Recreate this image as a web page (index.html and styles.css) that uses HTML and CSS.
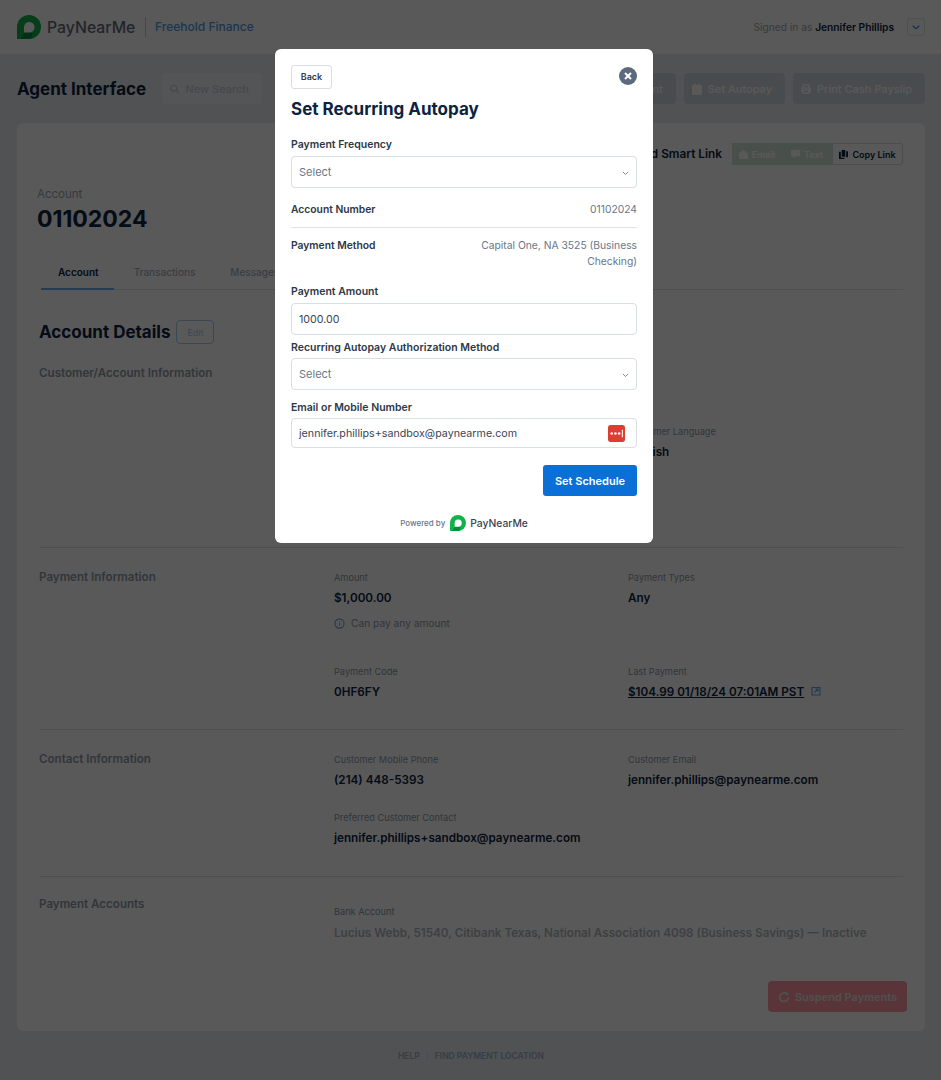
FILE: index.html
```html
<!DOCTYPE html>
<html lang="en">
<head>
    <meta charset="UTF-8">
    <meta name="viewport" content="width=device-width, initial-scale=1.0">
    <title>Agent Interface</title>
    <link rel="stylesheet" href="styles.css">
</head>
<body>
    <!-- Top bar -->
    <header class="topbar">
        <div class="brand">
            <svg class="logo" viewBox="0 0 24 24"><path fill="#12b24b" d="M0 24V12A12 12 0 1 1 12 24Z"/><path fill="#0b8a3a" d="M3.800 24 8 15.500l8 3-2 5.300Z"/><path fill="#fff" d="M7 17.500V12a5.300 5.300 0 1 1 5.300 5.500Z"/></svg>
            <span class="logo-text">PayNearMe</span>
            <span class="client">Freehold Finance</span>
        </div>
        <div class="user">
            <span>Signed in as <b>Jennifer Phillips</b></span>
            <button class="user-btn"><svg viewBox="0 0 10 6"><path d="M1 1l4 4 4-4" fill="none" stroke="#2a8fff" stroke-width="1.600"/></svg></button>
        </div>
    </header>

    <main class="page">
        <div class="toolbar">
            <h1>Agent Interface</h1>
            <button class="tool search">
                <svg viewBox="0 0 12 12"><circle cx="5" cy="5" r="3.800" fill="none" stroke="currentColor" stroke-width="1.500"/><path d="M8 8l3.500 3.500" stroke="currentColor" stroke-width="1.800"/></svg>
                New Search
            </button>
            <div class="tool-group">
                <button class="tool">Make Payment</button>
                <button class="tool">
                    <svg viewBox="0 0 10 12"><path fill="currentColor" d="M0 3.500a1.500 1.500 0 0 1 1.500-1.500H2V.5h1.500V2h3V.5H8V2h.5A1.500 1.500 0 0 1 10 3.500v7A1.500 1.500 0 0 1 8.500 12h-7A1.500 1.500 0 0 1 0 10.500Z"/></svg>
                    Set Autopay
                </button>
                <button class="tool">
                    <svg viewBox="0 0 11 11"><path fill="none" stroke="currentColor" stroke-width="1.400" d="M2.500 4V1h6v3M2.500 8.500H1V4.500h9v4H8.500M2.500 6.800h6V10h-6Z"/></svg>
                    Print Cash Payslip
                </button>
            </div>
        </div>

        <section class="card">
            <div class="smart">
                <span class="smart-title">Send Smart Link</span>
                <div class="smart-btns">
                    <span class="sm off"><svg viewBox="0 0 10 10"><path fill="currentColor" d="M0 4 5 0l5 4v6H0Z"/></svg>Email</span>
                    <span class="sm off"><svg viewBox="0 0 10 10"><path fill="currentColor" d="M0 0h10v7H5L2.500 9.500V7H0Z"/></svg>Text</span>
                    <span class="sm on"><svg viewBox="0 0 10 10"><path fill="currentColor" d="M3 0h4v7.500H3ZM0 2h2v6.500h4V10H0ZM8 1.500h2V8H8Z"/></svg>Copy Link</span>
                </div>
            </div>

            <div class="acct-label">Account</div>
            <div class="acct-num">01102024</div>

            <nav class="tabs">
                <a class="tab active">Account</a>
                <a class="tab">Transactions</a>
                <a class="tab">Messages</a>
            </nav>

            <div class="details-head">
                <h2>Account Details</h2>
                <button class="edit">Edit</button>
            </div>

            <div class="row row-customer">
                <h3>Customer/Account Information</h3>
                <div class="field"></div>
                <div class="field lang"><label>Customer Language</label><p>English</p></div>
            </div>

            <div class="row row-payment">
                <h3>Payment Information</h3>
                <div class="field">
                    <label>Amount</label><p>$1,000.00</p>
                    <div class="note"><svg viewBox="0 0 12 12"><circle cx="6" cy="6" r="5" fill="none" stroke="#5aa8f0" stroke-width="1.200"/><path d="M6 5.200v3.300M6 3.200v1" stroke="#5aa8f0" stroke-width="1.200"/></svg>Can pay any amount</div>
                </div>
                <div class="field"><label>Payment Types</label><p>Any</p></div>
                <div class="field later"><label>Payment Code</label><p>0HF6FY</p></div>
                <div class="field later"><label>Last Payment</label>
                    <p><u>$104.99 01/18/24 07:01AM PST</u><svg class="ext" viewBox="0 0 10 10"><path d="M1 1.500h8v7.500H1zM3.500 6.500 7 3M4.500 3H7v2.500" fill="none" stroke="#5aa8f0" stroke-width="1.100"/></svg></p>
                </div>
            </div>

            <div class="row row-contact">
                <h3>Contact Information</h3>
                <div class="field"><label>Customer Mobile Phone</label><p>(214) 448-5393</p></div>
                <div class="field"><label>Customer Email</label><p>jennifer.phillips@paynearme.com</p></div>
                <div class="field later"><label>Preferred Customer Contact</label><p>jennifer.phillips+sandbox@paynearme.com</p></div>
            </div>

            <div class="row row-accounts">
                <h3>Payment Accounts</h3>
                <div class="field wide"><label>Bank Account</label><p class="muted">Lucius Webb, 51540, Citibank Texas, National Association 4098 (Business Savings) — Inactive</p></div>
            </div>

            <div class="card-foot">
                <button class="suspend"><svg viewBox="0 0 14 14"><path d="M12 7.500A5 5 0 1 1 9.500 3M9.800.8v3H12.500" fill="none" stroke="currentColor" stroke-width="1.800"/></svg>Suspend Payments</button>
            </div>
        </section>

        <footer class="foot">
            <a>HELP</a>
            <a>FIND PAYMENT LOCATION</a>
        </footer>
    </main>

    <!-- Autopay modal -->
    <div class="overlay">
        <div class="modal">
            <div class="modal-top">
                <button class="back">Back</button>
                <svg class="close" viewBox="0 0 18 18"><circle cx="9" cy="9" r="9" fill="#5b6a7f"/><path d="M6 6l6 6M12 6l-6 6" stroke="#fff" stroke-width="2"/></svg>
            </div>
            <h2 class="modal-title">Set Recurring Autopay</h2>

            <label class="m-label first">Payment Frequency</label>
            <div class="input select">Select<svg viewBox="0 0 8 5"><path d="M1 1l3 3 3-3" fill="none" stroke="#6a7687" stroke-width="1"/></svg></div>

            <div class="info info-line"><b>Account Number</b><span>01102024</span></div>
            <div class="info info-method"><b>Payment Method</b><span>Capital One, NA 3525 (Business Checking)</span></div>

            <label class="m-label amount">Payment Amount</label>
            <div class="input val">1000.00</div>

            <label class="m-label auth">Recurring Autopay Authorization Method</label>
            <div class="input select">Select<svg viewBox="0 0 8 5"><path d="M1 1l3 3 3-3" fill="none" stroke="#6a7687" stroke-width="1"/></svg></div>

            <label class="m-label email">Email or Mobile Number</label>
            <div class="input val email-input">jennifer.phillips+sandbox@paynearme.com
                <svg class="pass" viewBox="0 0 16 16"><rect width="16" height="16" rx="2.500" fill="#e03c31"/><circle cx="3.500" cy="8" r="1.200" fill="#fff"/><circle cx="7" cy="8" r="1.200" fill="#fff"/><circle cx="10.500" cy="8" r="1.200" fill="#fff"/><path d="M13.500 4.500v7" stroke="#fff"/></svg>
            </div>

            <div class="actions"><button class="primary">Set Schedule</button></div>

            <div class="powered">
                <span>Powered by</span>
                <svg class="logo-small" viewBox="0 0 24 24"><path fill="#12b24b" d="M0 24V12A12 12 0 1 1 12 24Z"/><path fill="#0b8a3a" d="M3.800 24 8 15.500l8 3-2 5.300Z"/><path fill="#fff" d="M7 17.500V12a5.300 5.300 0 1 1 5.300 5.500Z"/></svg>
                <strong>PayNearMe</strong>
            </div>
        </div>
    </div>
</body>
</html>
```

FILE: styles.css
```css
/* Base */
* {
    box-sizing: border-box;
}
html, body {
    height: 1080px;
    overflow: hidden;
}
body {
    margin: 0;
    font-family: Inter, "Liberation Sans", sans-serif;
    background: #e5eaf0;
    color: #0c2340;
}
button {
    font-family: inherit;
}
h1, h2, h3, p {
    margin: 0;
}

/* Top bar */
.topbar {
    height: 54px;
    background: #fff;
    display: flex;
    justify-content: space-between;
    align-items: center;
    padding: 0 16px 0 17px;
}
.brand {
    display: flex;
    align-items: center;
}
.logo {
    width: 24px;
    height: 24px;
    margin-right: 6px;
}
.logo-text {
    font-size: 15.800px;
    font-weight: 500;
    color: #5f6b78;
    width: 98px;
}
.client {
    border-left: 1px solid #c9ced4;
    padding-left: 9px;
    line-height: 20px;
    font-size: 12px;
    font-weight: 500;
    color: #4f9be8;
}
.user {
    display: flex;
    align-items: center;
    gap: 13px;
    font-size: 10.200px;
    color: #9da6b0;
}
.user b {
    font-weight: 600;
    color: #0c2340;
}
.user-btn {
    width: 18px;
    height: 18px;
    padding: 0;
    background: #fff;
    border: 1px solid #e3e6ea;
    border-radius: 3px;
    display: flex;
    align-items: center;
    justify-content: center;
}
.user-btn svg {
    width: 8px;
}

/* Page */
.page {
    padding: 19px 16px 0 17px;
}
.toolbar {
    display: flex;
    align-items: center;
    height: 31px;
}
.toolbar h1 {
    font-size: 17px;
    font-weight: 700;
    width: 145px;
}
.tool {
    height: 31px;
    border: none;
    border-radius: 4px;
    background: #d2dae2;
    color: #fff;
    font-size: 11px;
    font-weight: 500;
    padding: 0 13px 0 8px;
    display: flex;
    align-items: center;
    gap: 6px;
    white-space: nowrap;
}
.tool svg {
    width: 10px;
    height: 12px;
}
.search {
    width: 100px;
    background: #f0f3f6;
    color: #c8d0d8;
}
.tool-group {
    margin-left: auto;
    display: flex;
    gap: 8px;
}

/* Card */
.card {
    margin-top: 19px;
    height: 908px;
    background: #fff;
    border-radius: 6px;
    padding: 20px 22px 0;
}
.smart {
    display: flex;
    justify-content: flex-end;
    align-items: center;
    gap: 10px;
    height: 22px;
}
.smart-title {
    font-size: 11.800px;
    font-weight: 600;
}
.smart-btns {
    display: flex;
    width: 171px;
    height: 22px;
    font-size: 9px;
    font-weight: 600;
}
.sm {
    display: flex;
    align-items: center;
    justify-content: center;
    gap: 4px;
}
.sm svg {
    width: 9px;
    height: 9px;
}
.sm.off {
    width: 50px;
    background: #d0e6d8;
    color: #fff;
}
.sm.on {
    flex: 1;
    background: #fff;
    border: 1px solid #d5dae0;
    border-radius: 0 3px 3px 0;
}
.acct-label {
    margin: 21px 0 0 -2px;
    font-size: 11.500px;
    line-height: 16px;
    color: #9da6b0;
}
.acct-num {
    font-size: 23px;
    line-height: 34px;
    font-weight: 700;
    margin-left: -2px;
}
.tabs {
    margin: 19px 0 0 2px;
    display: flex;
    height: 35px;
    border-bottom: 1px solid #dfe3e7;
    font-size: 10px;
    font-weight: 500;
    line-height: 34px;
    color: #a5b0bc;
}
.tab {
    padding: 0 15px 0 17px;
    margin-right: 3px;
}
.tab.active {
    color: #0c2340;
    font-weight: 600;
    height: 35px;
    border-bottom: 2px solid #6ab0f0;
}
.details-head {
    margin-top: 30px;
    display: flex;
    align-items: center;
    gap: 6px;
    height: 24px;
}
.details-head h2 {
    font-size: 17px;
    font-weight: 700;
}
.edit {
    width: 38px;
    height: 24px;
    padding: 0;
    background: #fff;
    border: 1px solid #a8cdf0;
    border-radius: 4px;
    color: #a8cdf0;
    font-size: 9px;
}

/* Detail rows */
.row {
    display: grid;
    grid-template-columns: 295px 294px 1fr;
    border-bottom: 1px solid #dfe3e7;
    align-content: start;
}
.row h3 {
    grid-row: 1 / 3;
    font-size: 11.600px;
    line-height: 14px;
    font-weight: 600;
    color: #8f9aa6;
}
.row-customer {
    height: 182px;
    margin-top: 22px;
}
.row-payment {
    height: 182px;
    padding-top: 22px;
}
.row-contact {
    height: 147px;
    padding-top: 22px;
}
.row-accounts {
    height: 85px;
    padding-top: 20px;
    border-bottom: none;
}
.row-payment .field:not(.later),
.row-contact .field:not(.later) {
    padding-top: 1px;
}
.lang {
    padding-top: 59px;
}
.field label {
    display: block;
    font-size: 9.200px;
    line-height: 14px;
    color: #8f9aa6;
}
.field p {
    margin-top: 5px;
    font-size: 11.700px;
    line-height: 16px;
    font-weight: 600;
    white-space: nowrap;
}
.field p.muted {
    color: #b0b8c0;
    margin-top: 6px;
}
.field.later {
    grid-column: 2;
    padding-top: 23px;
}
.row-payment .field.later {
    padding-top: 35px;
}
.field.later + .field.later {
    grid-column: 3;
}
.field.wide {
    grid-column: 2 / 4;
    padding-top: 8px;
}
.note {
    margin-top: 10px;
    display: flex;
    align-items: center;
    gap: 6px;
    font-size: 10.200px;
    line-height: 14px;
    color: #8f9aa6;
}
.note svg {
    width: 11px;
    height: 11px;
}
.ext {
    width: 10px;
    height: 10px;
    margin-left: 7px;
}
.card-foot {
    display: flex;
    justify-content: flex-end;
    margin: 19px -4px 0 0;
}
.suspend {
    width: 139px;
    height: 31px;
    border: none;
    border-radius: 4px;
    background: #ff97a6;
    color: #e8e4e4;
    font-size: 11px;
    font-weight: 600;
    display: flex;
    align-items: center;
    justify-content: center;
    gap: 5px;
    white-space: nowrap;
}
.suspend svg {
    width: 12px;
    height: 12px;
}
.foot {
    display: flex;
    justify-content: center;
    margin-top: 20px;
    font-size: 8.500px;
    font-weight: 600;
    color: #a5b0bc;
}
.foot a {
    padding: 0 7px;
}
.foot a + a {
    border-left: 1px solid #d5dae0;
}

/* Modal */
.overlay {
    position: fixed;
    top: 0;
    left: 0;
    width: 100%;
    height: 100%;
    background: rgba(0, 0, 0, 0.65);
    padding: 49px 0 0 275px;
}
.modal {
    width: 378px;
    height: 494px;
    background: #fff;
    border-radius: 6px;
    padding: 16px;
    font-size: 12px;
}
.modal-top {
    display: flex;
    justify-content: space-between;
    align-items: center;
    height: 24px;
}
.back {
    width: 41px;
    height: 24px;
    padding: 0 0 2px;
    background: #fff;
    border: 1px solid #d9dee3;
    border-radius: 3px;
    font-size: 9px;
    font-weight: 600;
    color: #2d3d50;
}
.close {
    width: 18px;
    height: 18px;
    margin-top: -3px;
}
.modal-title {
    margin-top: 9px;
    font-size: 17px;
    line-height: 22px;
    font-weight: 700;
}
.m-label {
    display: block;
    font-size: 10.500px;
    line-height: 14px;
    font-weight: 600;
    color: #2d3748;
}
.m-label.first {
    margin: 18px 0 4px;
}
.m-label.amount {
    margin: 16px 0 4px;
}
.m-label.auth {
    margin: 6px 0 3px;
}
.m-label.email {
    margin: 11px 0 3px;
}
.input {
    height: 32px;
    border: 1px solid #d9dee3;
    border-radius: 4px;
    padding: 0 7px;
    display: flex;
    align-items: center;
    justify-content: space-between;
    font-size: 10.700px;
}
.select {
    color: #6a7687;
    font-size: 11px;
}
.select svg {
    width: 7px;
    margin-top: 2px;
}
.val {
    color: #3b4656;
}
.email-input {
    height: 30px;
    padding-right: 11px;
}
.pass {
    width: 17px;
    height: 17px;
}
.info {
    display: flex;
    justify-content: space-between;
    font-size: 10.300px;
    line-height: 16px;
}
.info b {
    font-weight: 600;
    color: #2d3748;
    white-space: nowrap;
}
.info span {
    color: #6a7687;
    text-align: right;
}
.info-line {
    margin-top: 13px;
    padding-bottom: 10px;
    border-bottom: 1px solid #dfe3e7;
}
.info-method {
    margin-top: 9px;
}
.info-method span {
    width: 170px;
}
.actions {
    margin-top: 17px;
    display: flex;
    justify-content: flex-end;
}
.primary {
    width: 94px;
    height: 31px;
    border: none;
    border-radius: 3px;
    background: #0a6fd6;
    color: #fff;
    font-size: 11px;
    font-weight: 600;
}
.powered {
    margin-top: 19px;
    display: flex;
    align-items: center;
    justify-content: center;
    color: #6a7687;
    font-size: 8px;
    font-weight: 500;
}
.logo-small {
    width: 16px;
    height: 16px;
    margin: 0 4px 0 5px;
}
.powered strong {
    font-size: 10.300px;
    font-weight: 500;
    color: #3b4450;
}
```
